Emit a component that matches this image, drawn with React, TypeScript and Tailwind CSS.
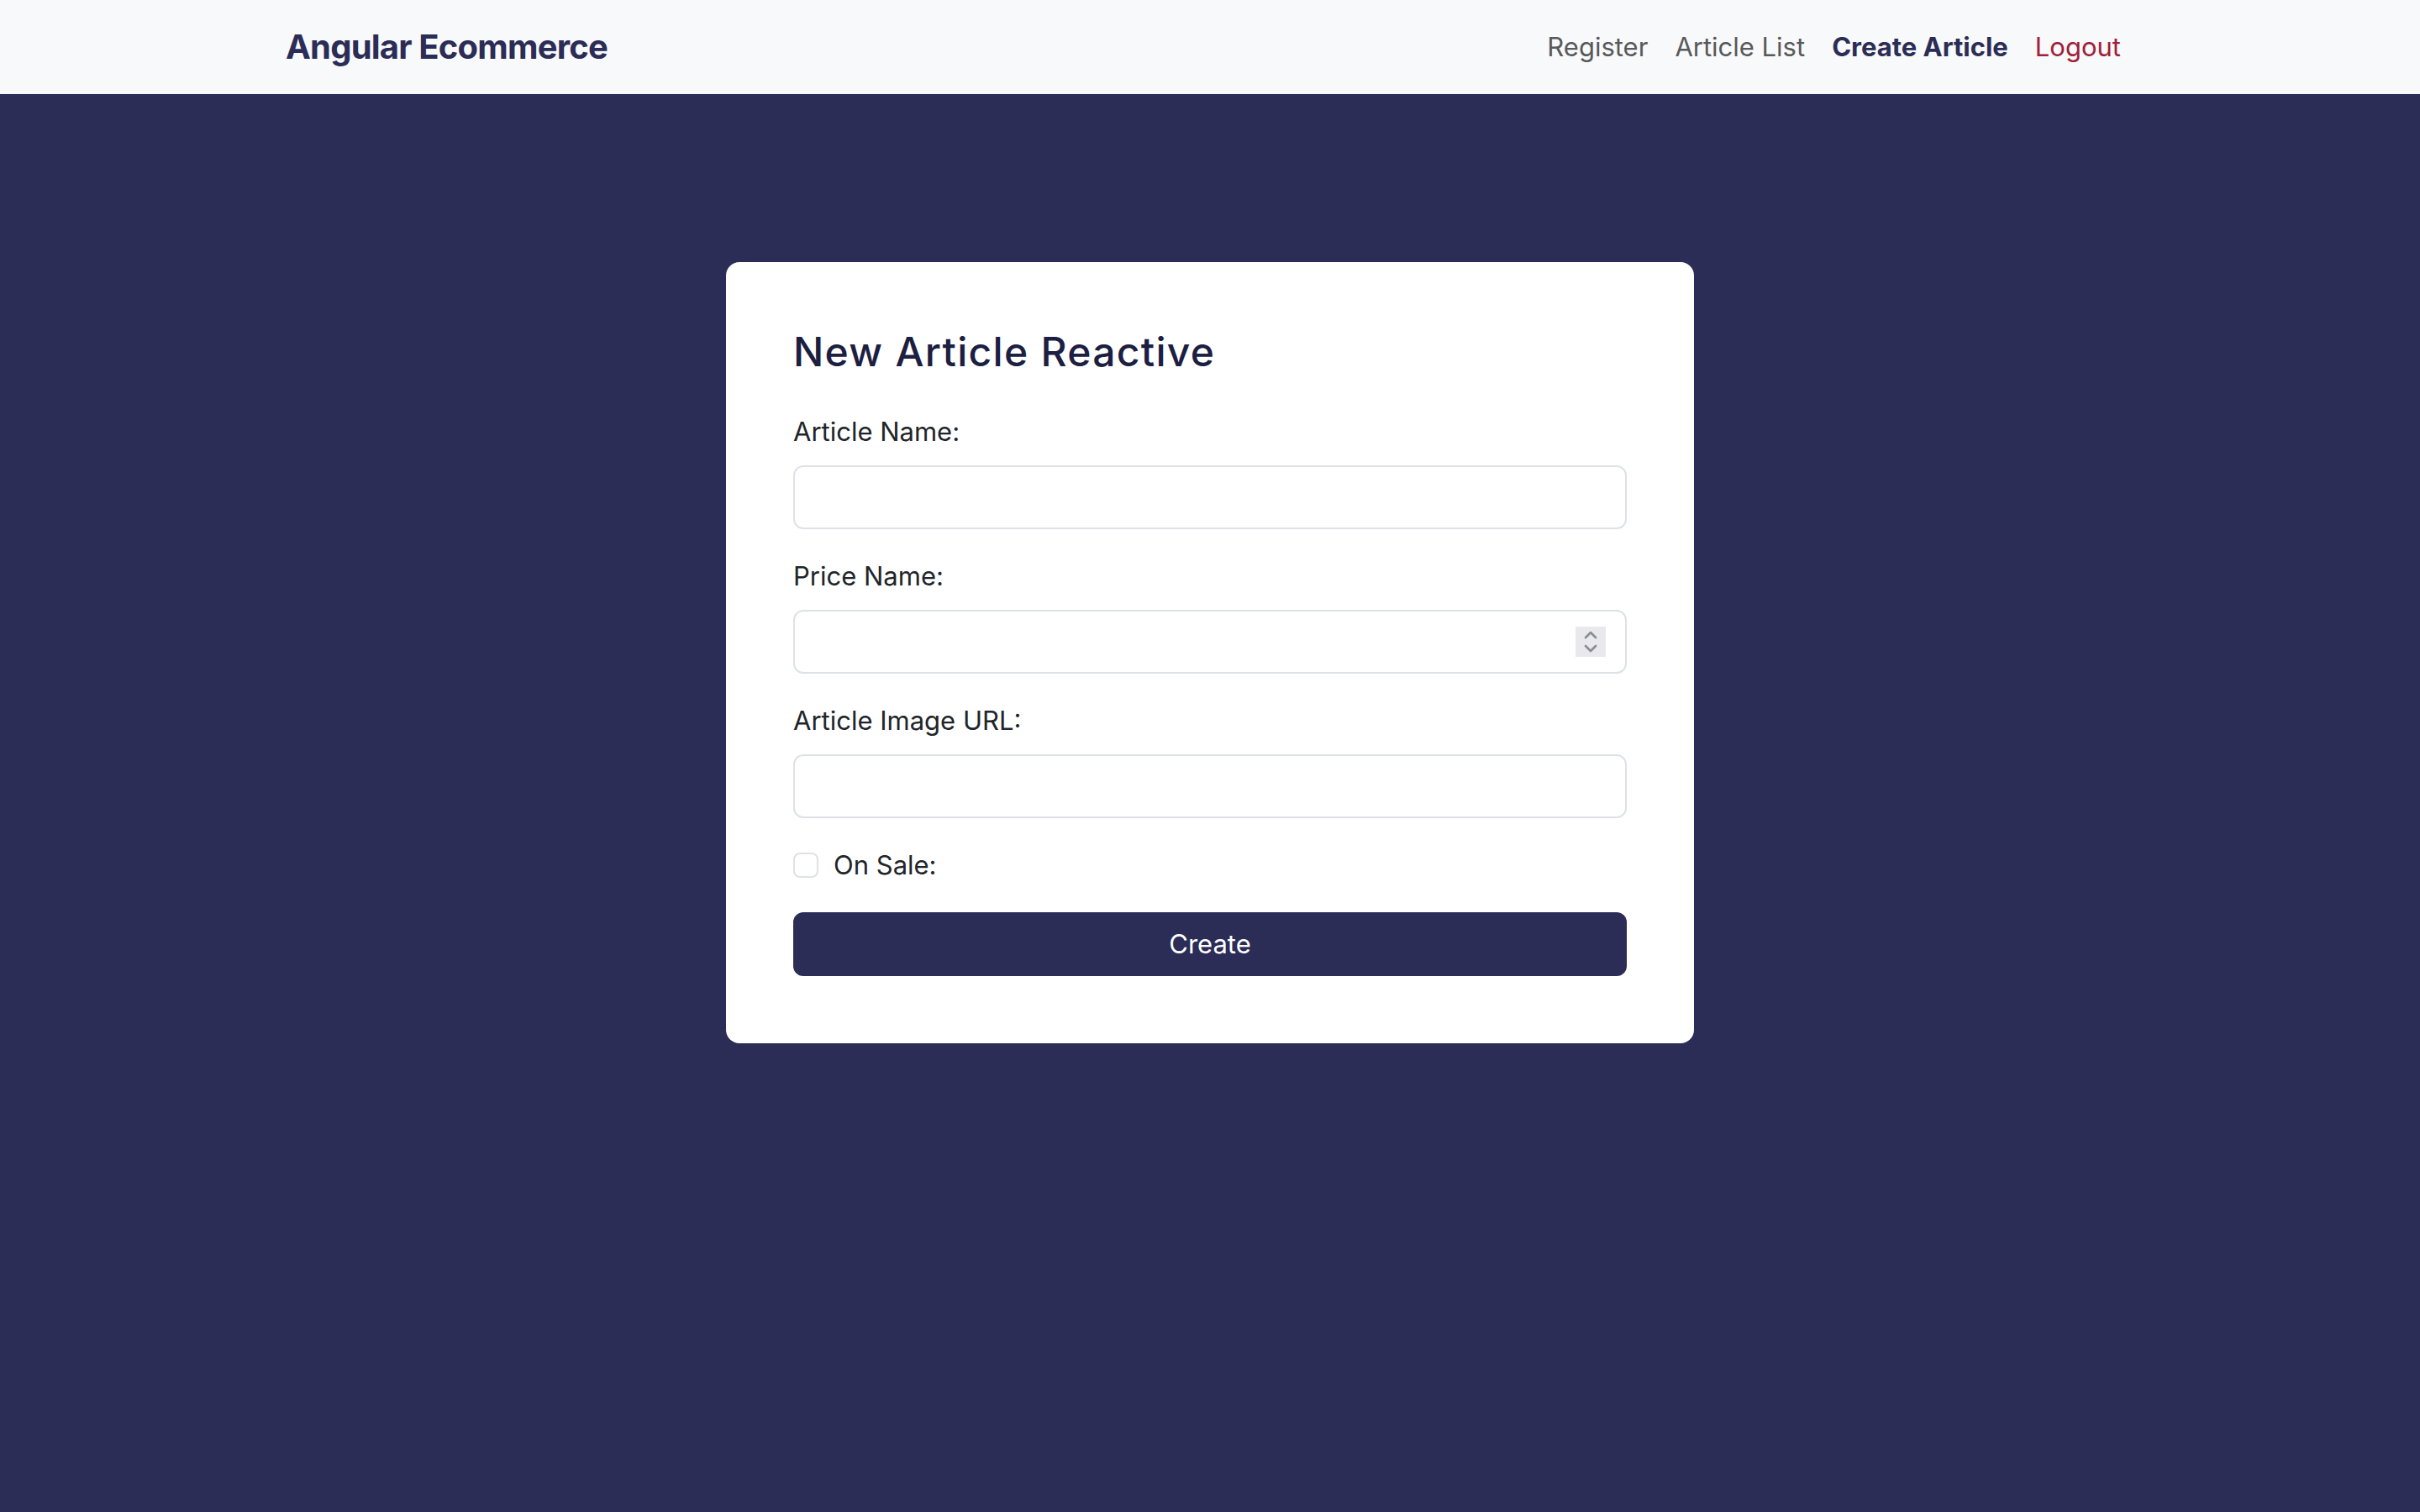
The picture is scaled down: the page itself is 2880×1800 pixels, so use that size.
import { useState } from "react";

const navy = "bg-[#2b2d56]";

const Field = ({
  label,
  type = "text",
  spinner = false,
}: {
  label: string;
  type?: string;
  spinner?: boolean;
}) => {
  const [value, setValue] = useState("");

  return (
    <div className="mb-8 flex flex-col">
      <label className="text-[31px] leading-[48px] text-[#212529]">{label}</label>
      <div className="relative mt-4">
        <input
          type={type}
          value={value}
          onChange={(e) => setValue(e.target.value)}
          className="h-[76px] w-full rounded-[12px] border-2 border-[#dee2e6] bg-white px-6 text-[32px] text-[#212529] outline-none [appearance:textfield] [&::-webkit-inner-spin-button]:appearance-none"
        />
        {spinner && (
          <div className="pointer-events-none absolute right-[25px] top-1/2 flex h-[36px] w-[36px] -translate-y-1/2 flex-col items-center justify-center gap-[6px] bg-[#e9e9ed]">
            <svg width="16" height="10" viewBox="0 0 16 10" fill="none">
              <path d="M2 8 L8 2 L14 8" stroke="#8d8d97" strokeWidth="2.8" strokeLinecap="round" strokeLinejoin="round" />
            </svg>
            <svg width="16" height="10" viewBox="0 0 16 10" fill="none">
              <path d="M2 2 L8 8 L14 2" stroke="#8d8d97" strokeWidth="2.8" strokeLinecap="round" strokeLinejoin="round" />
            </svg>
          </div>
        )}
      </div>
    </div>
  );
};

const App = () => {
  const [onSale, setOnSale] = useState(false);

  return (
    <div className={`min-h-screen ${navy} font-['Inter','Liberation_Sans',sans-serif]`}>
      <nav className="h-[112px] bg-[#f8f9fa]">
        <div className="mx-auto flex h-full w-[2200px] items-center justify-between">
          <a className="text-[40px] font-bold leading-[60px] tracking-[-0.8px] text-[#2b2d56]">
            Angular Ecommerce
          </a>
          <ul className="flex items-center text-[31px] leading-[48px]">
            <li className="px-4 text-[#58595b]">Register</li>
            <li className="px-4 text-[#58595b]">Article List</li>
            <li className="px-4 font-bold text-[#2b2d56]">Create Article</li>
            <li className="px-4 text-[#a11f3b]">Logout</li>
          </ul>
        </div>
      </nav>

      <div className="mx-auto mt-[200px] w-[1152px] rounded-[16px] bg-white p-[80px]">
        <h2 className="mb-[48px] pt-[4px] text-[48px] font-medium leading-[46px] tracking-[1.3px] text-[#1c1e42]">
          New Article Reactive
        </h2>
        <Field label="Article Name:" />
        <Field label="Price Name:" type="number" spinner />
        <Field label="Article Image URL:" />
        <div className="flex h-[48px] items-center gap-[18px]">
          <button
            type="button"
            onClick={() => setOnSale(!onSale)}
            className="h-[30px] w-[30px] rounded-[8px] border-2 border-[#dee2e6] bg-white"
          />
          <span className="text-[31px] text-[#212529]">On Sale:</span>
        </div>
        <button
          type="button"
          className={`mt-8 h-[76px] w-full rounded-[12px] ${navy} text-[31px] text-white`}
        >
          Create
        </button>
      </div>
    </div>
  );
};

export default App;
